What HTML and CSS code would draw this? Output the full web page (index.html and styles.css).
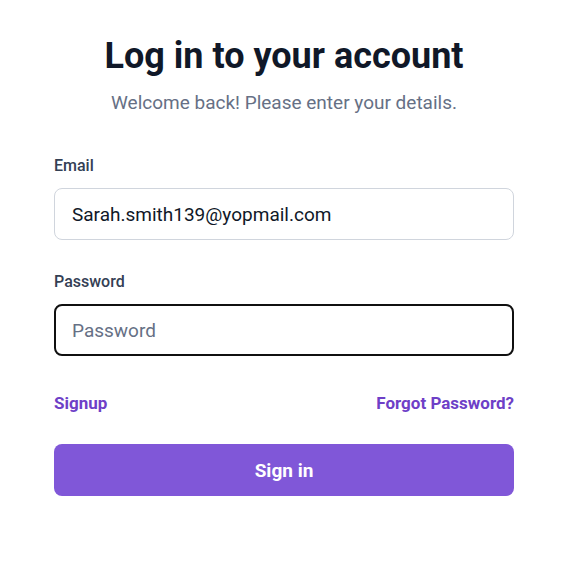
FILE: index.html
```html
<!DOCTYPE html>
<html>
<head>
<meta charset="utf-8">
<link rel="stylesheet" href="styles.css">
</head>
<body>
<main class="page">
  <h1 class="title">Log in to your account</h1>
  <p class="subtitle">Welcome back! Please enter your details.</p>
  <form class="form">
    <div class="field">
      <label class="label">Email</label>
      <div class="input">Sarah.smith139@yopmail.com</div>
    </div>
    <div class="field">
      <label class="label">Password</label>
      <div class="input input-focus placeholder">Password</div>
    </div>
    <div class="links">
      <a class="link">Signup</a>
      <a class="link">Forgot Password?</a>
    </div>
    <button type="button" class="btn">Sign in</button>
  </form>
</main>
</body>
</html>
```

FILE: styles.css
```css
* { box-sizing: border-box; }
body {
  margin: 0;
  background: #ffffff;
  font-family: Roboto, "Liberation Sans", sans-serif;
}
.page {
  width: 460px;
  margin-left: 54px;
  padding-top: 34px;
}
.title {
  margin: 0;
  text-align: center;
  font-size: 36px;
  font-weight: 700;
  line-height: 44px;
  color: #101828;
}
.subtitle {
  margin: 13px 0 0;
  text-align: center;
  font-size: 19px;
  line-height: 24px;
  color: #667085;
}
.form {
  margin-top: 41px;
  display: flex;
  flex-direction: column;
  gap: 32px;
}
.field {
  display: flex;
  flex-direction: column;
  gap: 12px;
}
.label {
  font-size: 16px;
  font-weight: 500;
  line-height: 20px;
  color: #344054;
}
.input {
  height: 52px;
  border: 1px solid #d0d5dd;
  border-radius: 8px;
  padding: 0 17px;
  display: flex;
  align-items: center;
  font-size: 19px;
  color: #101828;
}
.input-focus {
  border: 2px solid #101010;
  padding: 0 16px;
}
.placeholder { color: #667085; }
.links {
  display: flex;
  justify-content: space-between;
  margin-top: 5px;
  font-size: 17px;
  font-weight: 700;
  line-height: 20px;
}
.link { color: #6e3fc7; }
.btn {
  margin-top: -1px;
  height: 52px;
  border: none;
  border-radius: 8px;
  background: #8057d8;
  color: #ffffff;
  font-family: Roboto, "Liberation Sans", sans-serif;
  font-size: 19px;
  font-weight: 700;
}
```
